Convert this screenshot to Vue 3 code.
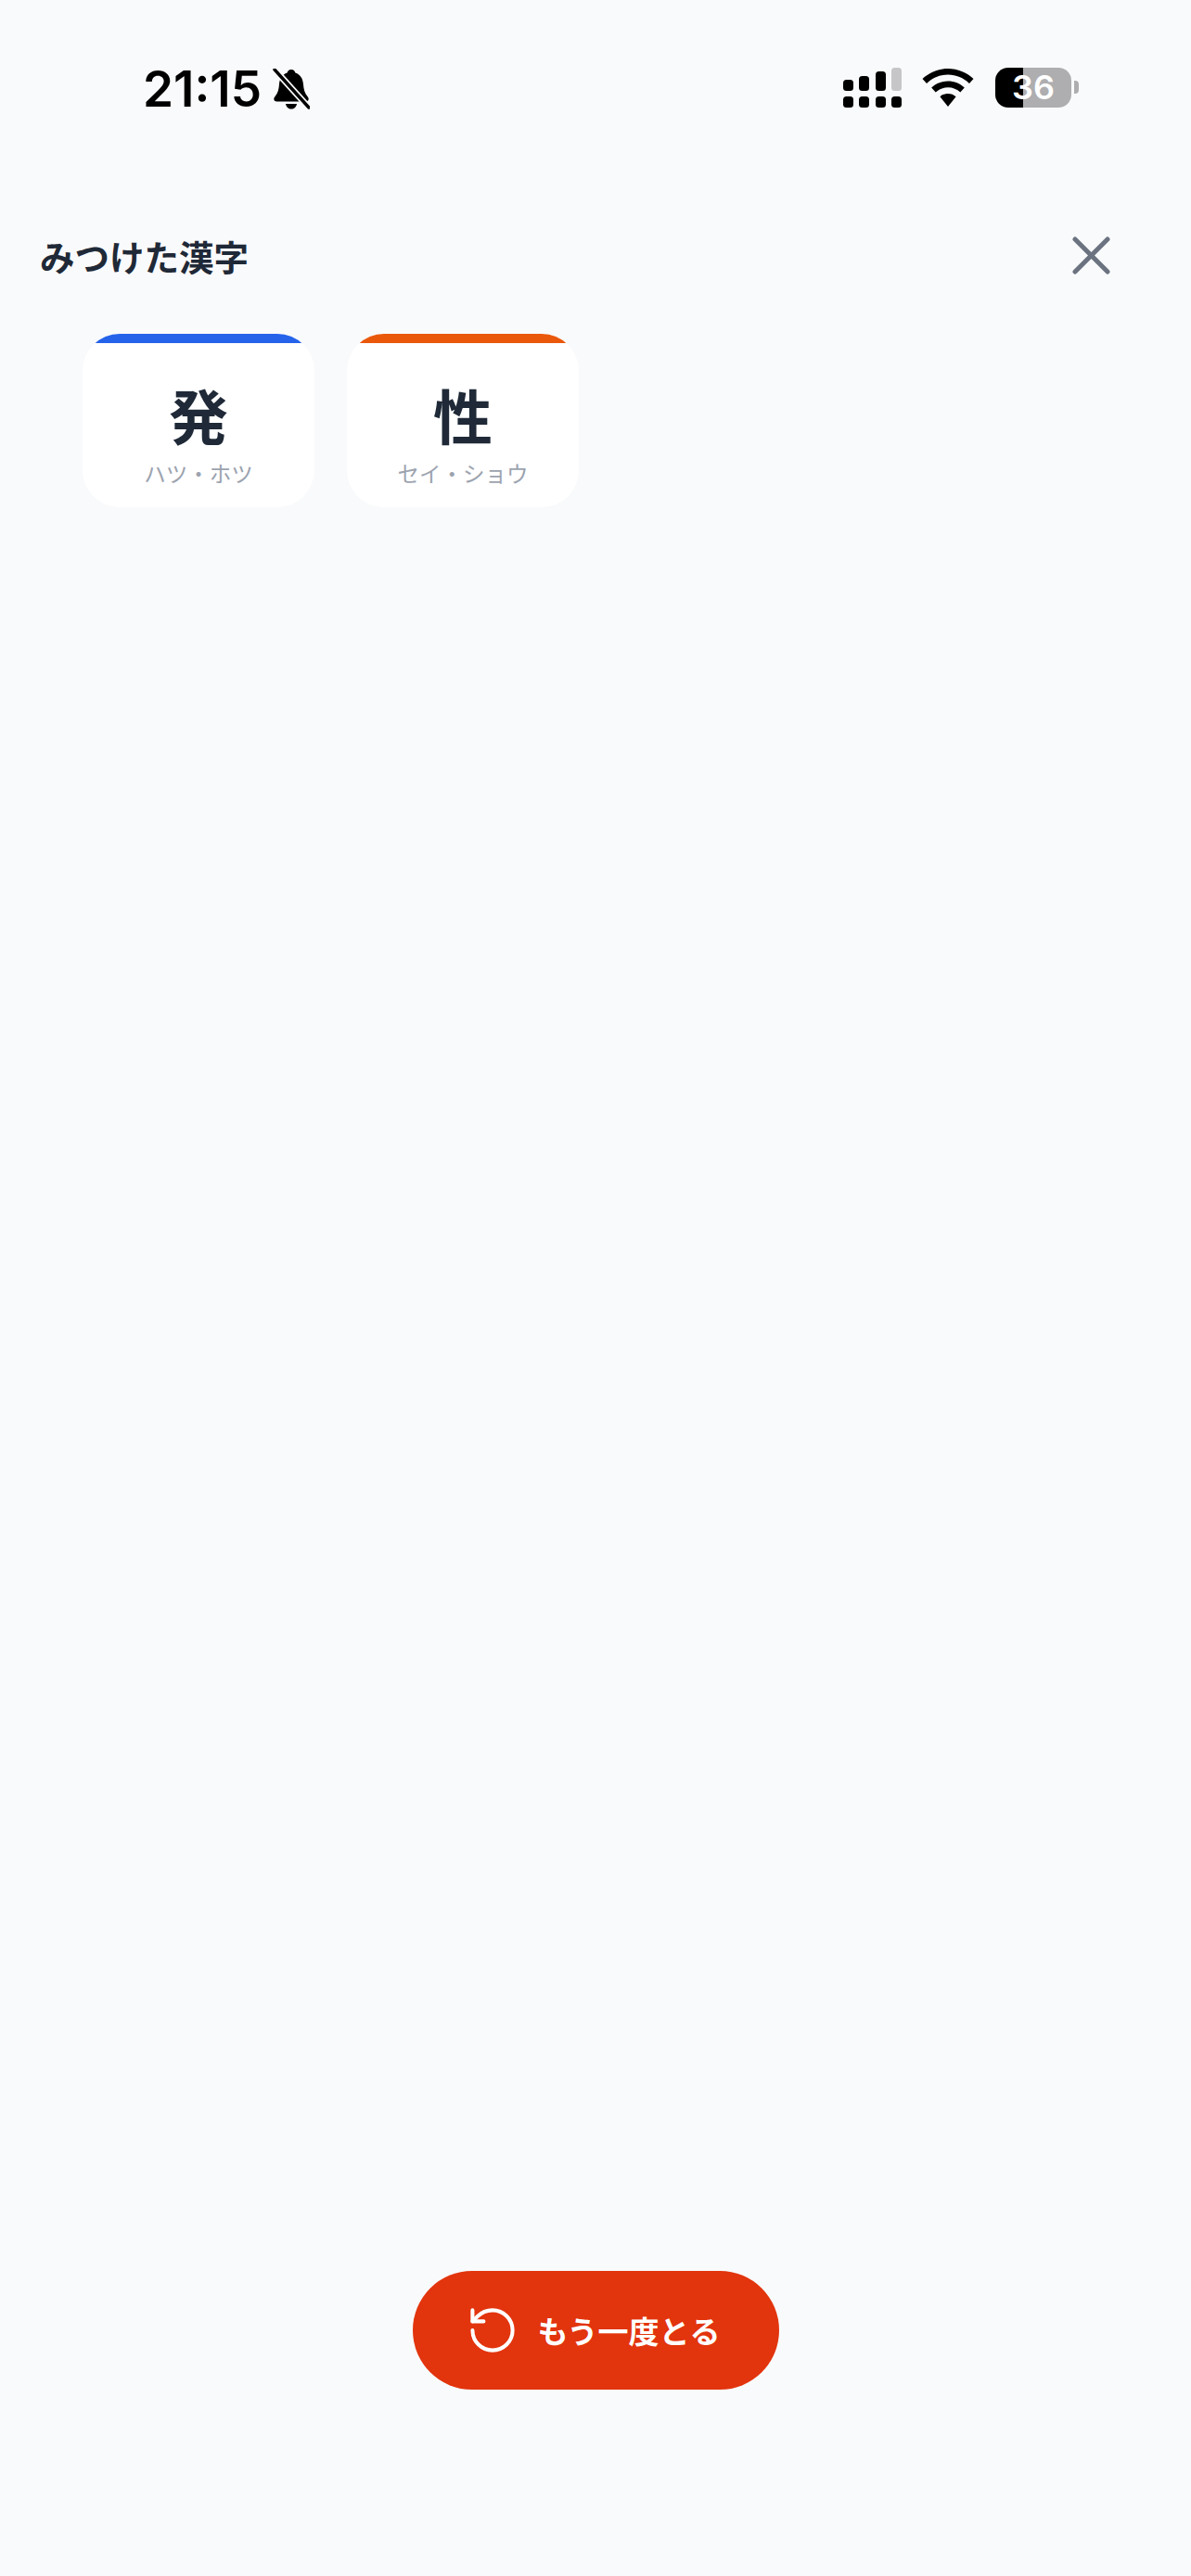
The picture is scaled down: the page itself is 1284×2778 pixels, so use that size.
<template>
  <div class="screen">
    <div class="status">
      <div class="status__left">
        <span class="status__time">21:15</span>
        <svg class="status__bell" viewBox="0 0 40 44" width="40" height="44">
          <path d="M20 1c2.400 0 4 1.600 4.400 3.600C30 6.500 32.500 11 33 17c.4 5.500 1.500 9.500 4.500 13 2 2.300 1.500 5.500-2 5.500H4.500c-3.500 0-4-3.200-2-5.500 3-3.500 4.100-7.500 4.500-13C7.500 11 10 6.500 15.600 4.600 16 2.600 17.600 1 20 1z" fill="#000" />
          <path d="M14 38h12c-.5 3.500-3 5.500-6 5.500s-5.500-2-6-5.500z" fill="#000" />
          <path d="M2 1l37 41" stroke="#f9fafb" stroke-width="7" fill="none" />
          <path d="M2 1l37 41" stroke="#000" stroke-width="3.400" stroke-linecap="round" fill="none" />
        </svg>
      </div>
      <div class="status__right">
        <svg viewBox="0 0 63 43" width="63" height="43">
          <rect x="0" y="13" width="11" height="12" rx="3.500" />
          <rect x="17" y="9" width="11" height="16" rx="3.500" />
          <rect x="35" y="4" width="11" height="21" rx="3.500" />
          <rect x="52" y="0" width="11" height="25" rx="3.500" fill="#c6c6c8" />
          <rect x="0" y="31" width="11" height="12" rx="3.500" />
          <rect x="17" y="31" width="11" height="12" rx="3.500" />
          <rect x="35" y="31" width="11" height="12" rx="3.500" />
          <rect x="52" y="31" width="11" height="12" rx="3.500" />
        </svg>
        <svg class="status__wifi" viewBox="0 0 56 41" width="56" height="41">
          <path d="M28 0c10.500 0 20 4 27.500 11l-4.500 5C44.800 10 36.800 6.500 28 6.500S11.200 10 5 16L.5 11C8 4 17.500 0 28 0z" />
          <path d="M28 13.500c6.800 0 13 2.600 17.800 7l-4.500 5C37.800 22.200 33 20.200 28 20.200s-9.800 2-13.300 5.300l-4.500-5c4.800-4.400 11-7 17.800-7z" />
          <path d="M28 27c3.300 0 6.300 1.200 8.600 3.300L28 41l-8.600-10.700C21.700 28.200 24.700 27 28 27z" />
        </svg>
        <div class="battery">
          <div class="battery__body">36</div>
          <div class="battery__nub"></div>
        </div>
      </div>
    </div>

    <div class="found">
      <h2 class="found__title">みつけた漢字</h2>
      <button class="found__close">
        <svg viewBox="0 0 41 41" width="41" height="41">
          <path d="M3 3l35 35M38 3L3 38" stroke="#6b7280" stroke-width="5" stroke-linecap="round" fill="none" />
        </svg>
      </button>
    </div>

    <div class="cards">
      <div v-for="kanji in kanjiList" :key="kanji.char" class="card">
        <div class="card__bar" :style="{ background: kanji.color }"></div>
        <div class="card__char">{{ kanji.char }}</div>
        <div class="card__reading">{{ kanji.reading }}</div>
      </div>
    </div>

    <button class="retry">
      <svg viewBox="2 2 20 20" width="48" height="48" fill="none" stroke="#fff" stroke-width="1.700" stroke-linecap="round" stroke-linejoin="round">
        <path d="M3 12a9 9 0 1 0 9-9 9.750 9.750 0 0 0-6.740 2.740L3 8" />
        <path d="M3 3v5h5" />
      </svg>
      <span>もう一度とる</span>
    </button>
  </div>
</template>

<script setup>
const kanjiList = [
  { char: "発", reading: "ハツ・ホツ", color: "#2563eb" },
  { char: "性", reading: "セイ・ショウ", color: "#ea580c" }
]
</script>

<style>
html,
body {
  background: #f9fafb;
}
</style>

<style scoped>
.screen {
  display: flex;
  flex-direction: column;
  height: 2778px;
  box-sizing: border-box;
  padding-bottom: 201px;
  background: #f9fafb;
  font-family: "Noto Sans CJK JP", "Noto Sans", sans-serif;
  color: #1f2937;
}
.status {
  display: flex;
  justify-content: space-between;
  align-items: center;
  height: 92px;
  padding: 50px 121px 0 154px;
  flex-shrink: 0;
}
.status__left {
  display: flex;
  align-items: center;
  gap: 12px;
}
.status__time {
  font-family: Inter, "Liberation Sans", sans-serif;
  font-size: 53px;
  font-weight: 600;
  color: #000;
  line-height: 1;
}
.status__right {
  display: flex;
  align-items: center;
  gap: 22px;
  margin-bottom: 4px;
}
.status__wifi {
  margin-right: 1px;
}
.battery {
  display: flex;
  align-items: center;
  gap: 3px;
}
.battery__body {
  width: 82px;
  height: 43px;
  border-radius: 14px;
  background: linear-gradient(90deg, #000 36.500%, #aeaeb0 36.500%);
  color: #fff;
  font-family: Inter, "Liberation Sans", sans-serif;
  font-size: 36px;
  font-weight: 600;
  line-height: 43px;
  text-align: center;
}
.battery__nub {
  width: 5px;
  height: 14px;
  border-radius: 0 4px 4px 0;
  background: #aeaeb0;
}
.found {
  display: flex;
  justify-content: space-between;
  align-items: center;
  padding: 0 87px 0 43px;
  margin-top: 85px;
  height: 96px;
}
.found__title {
  margin: 0;
  font-size: 37.500px;
  font-weight: 700;
  color: #1f2937;
}
.found__close {
  display: flex;
  padding: 0;
  border: 0;
  background: none;
}
.cards {
  display: flex;
  gap: 35px;
  padding: 0 89px;
  margin-top: 37px;
}
.card {
  display: flex;
  flex-direction: column;
  align-items: center;
  width: 250px;
  height: 187px;
  border-radius: 40px;
  background: #fff;
  overflow: hidden;
}
.card__bar {
  align-self: stretch;
  height: 10px;
  flex-shrink: 0;
}
.card__char {
  margin-top: 31px;
  font-size: 64px;
  font-weight: 700;
  line-height: 90px;
  color: #1f2937;
}
.card__reading {
  margin-top: 2px;
  font-size: 23.500px;
  line-height: 34px;
  color: #9ca3af;
}
.retry {
  display: flex;
  align-items: center;
  justify-content: center;
  gap: 24px;
  align-self: center;
  width: 395px;
  height: 128px;
  margin-top: auto;
  padding: 0;
  border: 0;
  border-radius: 64px;
  background: #e2340d;
  color: #fff;
  font-family: inherit;
  font-size: 33px;
  font-weight: 700;
}
</style>
